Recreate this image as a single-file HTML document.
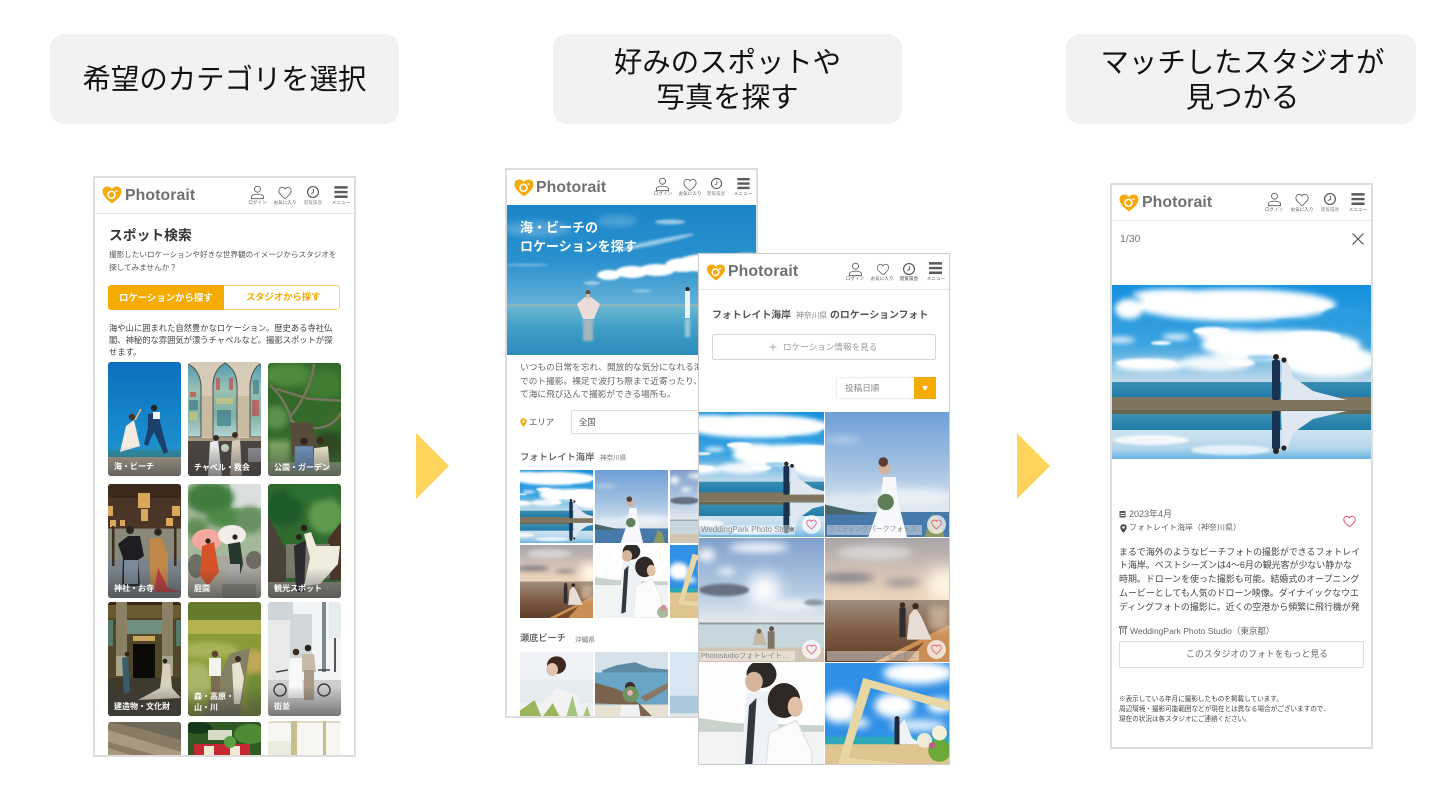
<!DOCTYPE html>
<html lang="ja"><head><meta charset="utf-8"><title>Photorait</title>
<style>
html,body{margin:0;padding:0;background:#fff}
body{position:relative;width:1452px;height:812px;overflow:hidden;font-family:"Liberation Sans","Noto Sans CJK JP",sans-serif;color:#444}
.h{position:absolute;top:34px;height:90px;width:349px;background:#f2f2f2;border-radius:14px;text-align:center;color:#111;font-size:28.400px;line-height:35px;font-family:"Liberation Sans","Noto Sans CJK JP",sans-serif}
.h span{position:absolute;left:0;right:0;top:12px}
.h span.one{top:29px}
.ar{position:absolute;top:433px;width:0;height:0;border-top:33px solid transparent;border-bottom:33px solid transparent;border-left:33px solid #ffd45c}
.ph{position:absolute;box-sizing:border-box;background:#fff;border:2px solid #ddd;overflow:hidden}
.in{position:absolute;width:1452px;height:812px;filter:blur(.3px)}
.t{position:absolute;white-space:nowrap;line-height:1}
.box{position:absolute;box-sizing:border-box}
svg.p{position:absolute;display:block}
.tile{position:absolute;width:73px;border-radius:3px;overflow:hidden}
.tile svg{position:absolute;left:0;top:0;width:100%;height:100%}
.tile:after{content:"";position:absolute;left:0;right:0;bottom:0;height:30px;background:linear-gradient(rgba(60,60,60,0),rgba(60,60,60,.6))}
.tile b{position:absolute;left:6px;z-index:2;color:#fff;font-size:8px;line-height:11px;font-weight:700;white-space:nowrap}
.logo{position:absolute;font-family:"Liberation Sans",sans-serif;font-weight:700;font-size:15.800px;color:#707070;line-height:1;letter-spacing:.1px}
.lb{position:absolute;font-size:4.600px;line-height:1;white-space:nowrap;color:#555;transform:translateX(-50%)}
.cap{position:absolute;background:rgba(255,255,255,.42);font-size:8px;line-height:10px;color:#8a8a8a;white-space:nowrap;overflow:hidden;padding-left:1px;box-sizing:border-box;height:10px}
.hc{position:absolute;width:19px;height:19px;border-radius:50%;background:rgba(255,255,255,.72)}
.hc svg{position:absolute;left:4px;top:4px}
</style></head><body>
<svg width="0" height="0" style="position:absolute">
<defs>
<filter id="b05" x="-40%" y="-40%" width="180%" height="180%"><feGaussianBlur stdDeviation=".5"/></filter>
<filter id="b1" x="-40%" y="-40%" width="180%" height="180%"><feGaussianBlur stdDeviation="1"/></filter>
<filter id="b2" x="-60%" y="-60%" width="220%" height="220%"><feGaussianBlur stdDeviation="3"/></filter>
<filter id="b6" x="-80%" y="-80%" width="260%" height="260%"><feGaussianBlur stdDeviation="6"/></filter>
<linearGradient id="gSky" x1="0" x2="0" y1="0" y2="1"><stop offset="0" stop-color="#1590de"/><stop offset=".6" stop-color="#3aa3e0"/><stop offset="1" stop-color="#c5dcea"/></linearGradient>
<linearGradient id="gSea" x1="0" x2="0" y1="0" y2="1"><stop offset="0" stop-color="#3a8eb2"/><stop offset="1" stop-color="#1f7ba8"/></linearGradient>
<linearGradient id="gRef" x1="0" x2="0" y1="0" y2="1"><stop offset="0" stop-color="#cfe3f0"/><stop offset=".6" stop-color="#b5d6ea"/><stop offset="1" stop-color="#6ab4e2"/></linearGradient>
<linearGradient id="gBri" x1="0" x2="0" y1="0" y2="1"><stop offset="0" stop-color="#6f9fd8"/><stop offset=".45" stop-color="#a4c3e2"/><stop offset=".8" stop-color="#dfe8f0"/></linearGradient>
<linearGradient id="gSun" x1="0" x2="0" y1="0" y2="1"><stop offset="0" stop-color="#7f9fcc"/><stop offset=".45" stop-color="#b8cde4"/><stop offset=".68" stop-color="#e6eaee"/></linearGradient>
<linearGradient id="gDusk" x1="0" x2="0" y1="0" y2="1"><stop offset="0" stop-color="#a8a4a8"/><stop offset=".5" stop-color="#cfc0b4"/><stop offset="1" stop-color="#eed6bc"/></linearGradient>
<linearGradient id="gSand" x1="0" x2="0" y1="0" y2="1"><stop offset="0" stop-color="#a08e80"/><stop offset=".5" stop-color="#7f5c44"/><stop offset="1" stop-color="#5e3d28"/></linearGradient>
<linearGradient id="gHero" x1="0" x2="0" y1="0" y2="1"><stop offset="0" stop-color="#1a86c8"/><stop offset=".55" stop-color="#2a90ce"/><stop offset="1" stop-color="#66b2d8"/></linearGradient>
<linearGradient id="gHeroSea" x1="0" x2="0" y1="0" y2="1"><stop offset="0" stop-color="#6cb6d0"/><stop offset=".45" stop-color="#3f9fc8"/><stop offset="1" stop-color="#2c8cbc"/></linearGradient>
<linearGradient id="gJump" x1="0" x2="0" y1="0" y2="1"><stop offset="0" stop-color="#0a70bd"/><stop offset=".7" stop-color="#1b8ecd"/><stop offset="1" stop-color="#45a4cf"/></linearGradient>
<linearGradient id="gWin" x1="0" x2="0" y1="0" y2="1"><stop offset="0" stop-color="#4f9cb0"/><stop offset=".35" stop-color="#9cc0b4"/><stop offset=".7" stop-color="#7fb0a4"/><stop offset="1" stop-color="#b6d4d4"/></linearGradient>
</defs>

<symbol id="reflect" viewBox="0 0 261 174" preserveAspectRatio="xMidYMid slice">
<rect width="261" height="98" fill="url(#gSky)"/>
<g fill="#fff" filter="url(#b2)"><ellipse cx="125" cy="20" rx="100" ry="16"/><ellipse cx="18" cy="24" rx="14" ry="10"/><ellipse cx="60" cy="10" rx="38" ry="6"/><ellipse cx="170" cy="60" rx="80" ry="15"/><ellipse cx="218" cy="76" rx="48" ry="16"/><ellipse cx="120" cy="50" rx="34" ry="6"/><ellipse cx="105" cy="78" rx="36" ry="8" opacity=".9"/><ellipse cx="40" cy="80" rx="36" ry="6"/><ellipse cx="65" cy="52" rx="14" ry="3" opacity=".9"/><ellipse cx="10" cy="55" rx="14" ry="3" opacity=".9"/></g>
<g fill="#fff" filter="url(#b1)"><ellipse cx="35" cy="78" rx="30" ry="4"/><ellipse cx="50" cy="58" rx="10" ry="2"/><ellipse cx="100" cy="46" rx="18" ry="4"/><ellipse cx="130" cy="78" rx="14" ry="3"/><ellipse cx="200" cy="52" rx="30" ry="6"/></g>
<g fill="#2a9ce0" filter="url(#b1)"><ellipse cx="235" cy="30" rx="24" ry="8" opacity=".8"/><ellipse cx="180" cy="36" rx="16" ry="2.500" opacity=".55"/><ellipse cx="150" cy="72" rx="14" ry="2" opacity=".4"/></g>
<rect y="97" width="261" height="16" fill="url(#gSea)"/>
<rect y="112" width="261" height="13" fill="#7f745e"/><rect y="125" width="261" height="5" fill="#67684f"/>
<rect y="129" width="261" height="16" fill="url(#gSea)"/>
<rect y="145" width="261" height="29" fill="url(#gRef)"/>
<g fill="#fff" filter="url(#b1)"><ellipse cx="40" cy="155" rx="38" ry="5" opacity=".8"/><ellipse cx="120" cy="165" rx="40" ry="5" opacity=".7"/></g>
<path d="M171 78 176 74 182 92 202 106 236 115 170 115Z" fill="#dfe7f0"/>
<rect x="161" y="75" width="8" height="40" rx="2" fill="#18324f"/><circle cx="165" cy="72" r="3" fill="#2a2420"/><circle cx="173" cy="75" r="2.600" fill="#2a2420"/>
<path d="M171 162 176 166 182 148 202 134 236 126 170 126Z" fill="#dfe7f0"/>
<rect x="161" y="126" width="8" height="38" rx="2" fill="#18324f"/><circle cx="165" cy="166" r="3" fill="#2a2420"/><circle cx="173" cy="163" r="2.600" fill="#2a2420"/>
</symbol>

<symbol id="bride" viewBox="0 0 100 100" preserveAspectRatio="xMidYMid slice">
<rect width="100" height="100" fill="url(#gBri)"/>
<g fill="#fff" filter="url(#b2)"><ellipse cx="70" cy="68" rx="34" ry="7" opacity=".6"/><ellipse cx="20" cy="70" rx="20" ry="5" opacity=".4"/><ellipse cx="15" cy="22" rx="14" ry="2" opacity=".5"/></g>
<rect y="80" width="100" height="20" fill="#4879ab"/>
<path d="M0 74 18 78 38 82 0 82Z" fill="#4a6668"/>
<path d="M80 100 86 82 92 86 96 100Z" fill="#8a9a60"/>
<path d="M47 52 57 52 59 72 66 100 35 100 44 74Z" fill="#f5f7fa"/>
<circle cx="48" cy="45" r="5" fill="#d2b09a"/><circle cx="47" cy="40" r="3.800" fill="#5b3c2e"/>
<circle cx="49" cy="72" r="6.500" fill="#5e7e55"/>
</symbol>

<symbol id="sun" viewBox="0 0 100 100" preserveAspectRatio="xMidYMid slice">
<rect width="100" height="100" fill="url(#gSun)"/>
<g filter="url(#b6)"><circle cx="52" cy="42" r="13" fill="#fff"/></g>
<g fill="#fff" filter="url(#b2)"><ellipse cx="48" cy="8" rx="24" ry="4" opacity=".9"/><ellipse cx="6" cy="14" rx="7" ry="5" opacity=".9"/><ellipse cx="22" cy="27" rx="7" ry="2.500"/><ellipse cx="76" cy="54" rx="20" ry="4" opacity=".7"/></g>
<g filter="url(#b1)"><ellipse cx="20" cy="42" rx="20" ry="5" fill="#666f80"/><ellipse cx="92" cy="52" rx="8" ry="2.500" fill="#8c97a4"/></g>
<rect y="68" width="100" height="22" fill="#c8d7de"/><rect y="68" width="100" height="1.500" fill="#8a9aa4"/>
<rect y="88" width="100" height="12" fill="#d2c4b2"/>
<path d="M45 76 51 76 54 86 43 86Z" fill="#c6b9a4"/><circle cx="48" cy="75" r="2" fill="#7a6656"/>
<rect x="55" y="75" width="5.500" height="14" fill="#7e7466"/><circle cx="58" cy="73" r="2" fill="#5d5048"/>
</symbol>

<symbol id="sunset" viewBox="0 0 100 100" preserveAspectRatio="xMidYMid slice">
<rect width="100" height="50" fill="url(#gDusk)"/>
<g filter="url(#b6)"><circle cx="96" cy="38" r="14" fill="#fff5e6"/></g>
<g filter="url(#b2)"><ellipse cx="18" cy="32" rx="22" ry="3.500" fill="#7f7d85"/><ellipse cx="62" cy="36" rx="14" ry="2.500" fill="#8d8a90"/><ellipse cx="40" cy="12" rx="30" ry="6" fill="#d8d4d4"/></g>
<rect y="50" width="100" height="50" fill="url(#gSand)"/>
<path d="M40 100 100 70 100 100Z" fill="#c98f55"/>
<path d="M48 100 80 84 66 100Z" fill="#7a4a2c"/>
<rect x="84" y="55" width="16" height="20" fill="#e6cfb4" opacity=".6" filter="url(#b2)"/>
<rect x="60" y="56" width="5" height="24" fill="#2f2d30"/><circle cx="62.500" cy="54" r="2.200" fill="#3a2a20"/>
<path d="M68 62 73 56 78 64 86 82 66 82Z" fill="#e6ddd6"/><circle cx="73" cy="55" r="2.600" fill="#3a2a20"/>
</symbol>

<symbol id="couple" viewBox="0 0 100 100" preserveAspectRatio="xMidYMid slice">
<rect width="100" height="100" fill="#fdfdfd"/>
<path d="M0 44 28 48 100 50 100 56 0 56Z" fill="#c8d3cb"/><rect y="55" width="100" height="45" fill="#f2f4f4"/>
<path d="M38 24 62 22 66 100 32 100Z" fill="#eef2f7"/>
<path d="M40 34 46 28 42 92 36 94Z" fill="#323842"/>
<ellipse cx="50" cy="9" rx="12" ry="11" fill="#2e2a28"/><ellipse cx="44" cy="15" rx="7" ry="8" fill="#d7b59b"/>
<path d="M56 56 78 46 90 70 92 100 52 100Z" fill="#fbfbfb" stroke="#e2e2e2"/>
<ellipse cx="68" cy="30" rx="13" ry="14" fill="#2f2825"/><ellipse cx="77" cy="35" rx="6" ry="8" fill="#e2c0a8"/>
<ellipse cx="93" cy="92" rx="8" ry="8" fill="#a9b89a"/><circle cx="94" cy="86" r="4" fill="#d68e99"/>
</symbol>

<symbol id="frame" viewBox="0 0 100 100" preserveAspectRatio="xMidYMid slice">
<rect width="100" height="100" fill="#2f90e6"/>
<g fill="#fff" filter="url(#b2)"><ellipse cx="75" cy="8" rx="28" ry="9"/><ellipse cx="12" cy="36" rx="14" ry="12"/><ellipse cx="56" cy="34" rx="16" ry="10"/><ellipse cx="92" cy="34" rx="10" ry="6"/><ellipse cx="75" cy="50" rx="22" ry="5" opacity=".8"/><ellipse cx="28" cy="48" rx="8" ry="4" opacity=".9"/></g>
<rect y="59" width="100" height="7" fill="#2da8b8"/><rect y="65" width="100" height="35" fill="#dfc48f"/>
<path d="M31 12 100 31 100 38 37 20 19 76 66 81 100 84 100 90 66 87 11 81Z" fill="#e8d6a4"/>
<rect x="56" y="46" width="4" height="19" fill="#1f2a3c"/><circle cx="58" cy="44.500" r="2" fill="#2a2420"/>
<path d="M60 50 64 45 70 60 78 65 60 65Z" fill="#f0f2f4"/>
<circle cx="92" cy="70" r="9" fill="#6ca838"/><circle cx="80" cy="62" r="6" fill="#f0ead8"/><circle cx="92" cy="56" r="6" fill="#f4f0d8"/><circle cx="86" cy="66" r="2.500" fill="#c05a90"/>
</symbol>

<symbol id="face" viewBox="0 0 100 100" preserveAspectRatio="xMidYMid slice">
<rect width="100" height="100" fill="#eef2f6"/><rect y="38" width="100" height="32" fill="#e4ecf0"/>
<path d="M30 72 50 50 80 60 80 100 30 100Z" fill="#f2f2f2"/>
<ellipse cx="50" cy="18" rx="13" ry="12" fill="#3c2820"/><ellipse cx="44" cy="24" rx="8" ry="9" fill="#e2c4ac"/>
<path d="M0 100 0 80 20 66 30 90 45 70 60 100Z" fill="#9ab65a"/><path d="M60 100 72 60 82 100 92 74 100 100Z" fill="#a7c47a"/>
</symbol>

<symbol id="lake" viewBox="0 0 100 100" preserveAspectRatio="xMidYMid slice">
<rect width="100" height="100" fill="#d5e2ec"/>
<path d="M10 25 30 18 55 14 75 22 100 24 100 30 10 30Z" fill="#5c8ba3"/>
<rect y="28" width="100" height="46" fill="#6ba5c5"/><rect y="72" width="100" height="28" fill="#e9e2d2"/>
<path d="M0 42 34 52 62 72 90 100 74 100 40 72 0 70Z" fill="#7a624d"/>
<path d="M62 62 100 42 100 50 70 68Z" fill="#8a7866"/>
<path d="M36 72 60 72 64 100 32 100Z" fill="#f2f2f2"/>
<circle cx="48" cy="48" r="7" fill="#36302c"/><circle cx="49" cy="58" r="11" fill="#6f9460"/><circle cx="48" cy="56" r="4" fill="#e4b0b4"/>
</symbol>

<symbol id="lightsea" viewBox="0 0 100 100" preserveAspectRatio="xMidYMid slice">
<rect width="100" height="100" fill="#d8e6f2"/><rect y="60" width="100" height="28" fill="#a9c9dc"/><rect y="84" width="100" height="16" fill="#e4e8ea"/><ellipse cx="100" cy="55" rx="8" ry="12" fill="#5a3c2c"/>
</symbol>

<symbol id="hero" viewBox="0 0 250 150" preserveAspectRatio="xMidYMid slice">
<rect width="250" height="100" fill="url(#gHero)"/>
<g fill="#fff" filter="url(#b1)"><ellipse cx="150" cy="37" rx="38" ry="2.500" transform="rotate(-12 150 37)" opacity=".5"/><ellipse cx="163" cy="17" rx="15" ry="2.500" opacity=".55"/><ellipse cx="20" cy="60" rx="22" ry="1.500" opacity=".3"/><ellipse cx="85" cy="78" rx="8" ry="1.800" opacity=".5"/><ellipse cx="135" cy="86" rx="10" ry="1.500" opacity=".35"/></g>
<g fill="#fff" filter="url(#b2)"><ellipse cx="30" cy="24" rx="34" ry="8" opacity=".22"/><ellipse cx="110" cy="16" rx="20" ry="6" opacity=".2"/></g>
<g fill="#fff" filter="url(#b1)"><ellipse cx="102" cy="70" rx="12" ry="5"/><ellipse cx="125" cy="67" rx="16" ry="6"/><ellipse cx="150" cy="65" rx="18" ry="6"/><ellipse cx="176" cy="60" rx="18" ry="7"/><ellipse cx="200" cy="58" rx="30" ry="9"/><ellipse cx="240" cy="56" rx="22" ry="8"/></g>
<rect y="99" width="250" height="2" fill="#8fb5bc"/>
<rect y="101" width="250" height="49" fill="url(#gHeroSea)"/>
<rect x="76" y="114" width="10" height="22" fill="#e6c8bc" opacity=".6" filter="url(#b1)"/>
<path d="M78 92 84 92 93 99 87 114 76 114 70 99Z" fill="#ecdcd8"/>
<circle cx="81" cy="87.500" r="2.400" fill="#6a4c3c"/><rect x="79.500" y="89" width="3" height="5" fill="#e8c4ac"/>
<rect x="178" y="86" width="5" height="27" fill="#f0f0f0"/><circle cx="180.500" cy="84" r="2" fill="#2a2420"/><rect x="178" y="114" width="5" height="18" fill="#d8e4e8" opacity=".6" filter="url(#b1)"/>
</symbol>

<symbol id="s1" viewBox="0 0 73 114" preserveAspectRatio="none">
<rect width="73" height="114" fill="url(#gJump)"/><rect y="88" width="73" height="8" fill="#2b8fa8"/><rect y="95" width="73" height="19" fill="#a79e8c"/>
<path d="M18 64 26 58 32 84 12 90Z" fill="#f2ece0"/><circle cx="24" cy="55" r="3.200" fill="#4a3428"/><path d="M27 58 33 47" stroke="#e2b89c" stroke-width="1.600"/>
<path d="M40 52 50 50 53 64 60 90 56 92 46 70 42 78 40 84 36 82 40 66Z" fill="#1c3f6e"/><circle cx="46" cy="46" r="3.200" fill="#2a2420"/><rect x="45" y="50" width="7" height="7" fill="#f4f4f4"/>
</symbol>

<symbol id="s2" viewBox="0 0 73 114" preserveAspectRatio="none">
<rect width="73" height="114" fill="#d6cbb6"/>
<g stroke="#4a4a4a" stroke-width="1" fill="url(#gWin)"><path d="M25 75V24Q25 8 37 1 49 8 49 24V75Z"/><path d="M-6 75V24Q-6 8 0 2 12 8 13 24V75Z"/><path d="M62 75V24Q63 8 72 2 80 8 80 24V75Z"/></g>
<g fill="#c2504c" opacity=".75"><rect x="28" y="16" width="4" height="12"/><rect x="41" y="16" width="4" height="12"/><rect x="2" y="30" width="6" height="5"/><rect x="64" y="38" width="7" height="16"/></g>
<g fill="#d9c86e" opacity=".6"><rect x="28" y="36" width="17" height="6"/><rect x="1" y="50" width="9" height="8"/></g>
<g fill="#3e7f8c" opacity=".7"><rect x="29" y="48" width="14" height="16"/><rect x="1" y="38" width="9" height="10"/><rect x="65" y="18" width="6" height="14"/></g>
<rect x="14" y="34" width="10" height="41" fill="#c8bba0"/><rect x="50" y="34" width="11" height="41" fill="#c8bba0"/>
<rect y="76" width="73" height="38" fill="#4a4340"/><rect y="76" width="73" height="3" fill="#a8987f"/><rect x="60" y="86" width="13" height="14" fill="#8a8a90"/>
<path d="M22 80 30 78 34 114 20 114Z" fill="#e8e8e8"/><circle cx="28" cy="76" r="3" fill="#352a24"/>
<path d="M44 79 52 77 54 114 42 114Z" fill="#d4cab8"/><circle cx="47" cy="73" r="3" fill="#3a2c22"/><circle cx="37" cy="86" r="4" fill="#c8d0b8"/>
</symbol>

<symbol id="s3" viewBox="0 0 73 114" preserveAspectRatio="none">
<rect width="73" height="114" fill="#336a2a"/>
<g filter="url(#b2)"><ellipse cx="20" cy="12" rx="24" ry="12" fill="#4f8a3e"/><ellipse cx="55" cy="22" rx="20" ry="16" fill="#3f7c32"/><ellipse cx="8" cy="55" rx="12" ry="12" fill="#5a9048"/><ellipse cx="66" cy="55" rx="10" ry="10" fill="#3a6a2c"/></g>
<g filter="url(#b2)"><rect y="78" width="22" height="36" fill="#7aa25e"/><rect x="50" y="70" width="23" height="24" fill="#2e4a24"/></g>
<path d="M2 22C14 34 22 48 24 62M46 1C44 22 32 42 24 52 18 58 30 62 42 66 54 66 66 64 73 50M8 26 40 36 73 38" fill="none" stroke="#7a7460" stroke-width="2.400"/>
<path d="M22 60H44L52 94H24Z" fill="#574c3c"/>
<rect y="100" width="73" height="14" fill="#8aa07a"/>
<path d="M27 84 45 84 46 108 26 108Z" fill="#6c8fb8"/><circle cx="36" cy="79" r="3.600" fill="#2e2420"/>
<path d="M46 86 60 84 62 108 46 108Z" fill="#e8e2c8"/><circle cx="52" cy="78" r="3.600" fill="#3a2a20"/>
</symbol>

<symbol id="s4" viewBox="0 0 73 114" preserveAspectRatio="none">
<rect width="73" height="114" fill="#6e5a45"/><rect width="73" height="14" fill="#3c2a1c"/><rect y="14" width="73" height="30" fill="#4b3526"/>
<g fill="#d9a85a"><rect x="30" y="9" width="12" height="15"/><rect x="33" y="25" width="7" height="12"/><rect x="64" y="22" width="8" height="10"/><rect x="0" y="22" width="5" height="10"/><rect x="2" y="36" width="6" height="7"/><rect x="12" y="36" width="5" height="6"/><rect x="58" y="34" width="7" height="8"/></g>
<rect y="45" width="73" height="30" fill="#8a8878"/><rect y="75" width="73" height="39" fill="#7a838c"/>
<rect x="4" y="42" width="2.500" height="40" fill="#3e2c1e"/><rect x="66" y="42" width="2.500" height="40" fill="#3e2c1e"/>
<path d="M10 60 20 52 32 52 36 72 30 76 32 102 14 102 15 74Z" fill="#1e1d22"/><circle cx="22" cy="46" r="4" fill="#2a2420"/><rect x="16" y="76" width="14" height="24" fill="#7a8a9a"/>
<path d="M42 54 54 54 60 72 60 105 42 105Z" fill="#c2884a"/><path d="M50 84 60 104 72 108 46 108Z" fill="#d03a3a"/><circle cx="50" cy="48" r="3.800" fill="#2a2420"/>
</symbol>

<symbol id="s5" viewBox="0 0 73 114" preserveAspectRatio="none">
<rect width="73" height="114" fill="#a4b89a"/>
<rect x="42" width="31" height="24" fill="#dadfde"/>
<g filter="url(#b2)"><ellipse cx="22" cy="14" rx="24" ry="16" fill="#3f7c3c"/><ellipse cx="40" cy="34" rx="22" ry="10" fill="#4d8a47"/><ellipse cx="62" cy="36" rx="14" ry="14" fill="#688f62"/><ellipse cx="8" cy="44" rx="12" ry="10" fill="#5f8f55"/></g>
<rect y="72" width="73" height="42" fill="#a8a89c"/><ellipse cx="66" cy="76" rx="8" ry="9" fill="#6d6b62"/><ellipse cx="8" cy="82" rx="8" ry="12" fill="#6c7064"/><rect x="34" y="100" width="34" height="14" fill="#8a8a7e"/>
<ellipse cx="19" cy="56" rx="15" ry="11" fill="#f3a8a0"/><ellipse cx="44" cy="51" rx="14" ry="10" fill="#f2ede8"/>
<path d="M14 62 26 58 31 88 20 102 12 92Z" fill="#d6532a"/><circle cx="20" cy="57" r="2.600" fill="#2a2018"/>
<path d="M40 60 52 58 55 80 50 98 44 98Z" fill="#26382e"/><circle cx="47" cy="53" r="2.600" fill="#2a2018"/><rect x="41" y="80" width="11" height="18" fill="#a9a9aa"/>
</symbol>

<symbol id="s6" viewBox="0 0 73 114" preserveAspectRatio="none">
<rect width="73" height="114" fill="#2f6a2e"/>
<g filter="url(#b2)"><ellipse cx="16" cy="24" rx="18" ry="18" fill="#1f5a2a"/><ellipse cx="58" cy="32" rx="18" ry="18" fill="#5f9b4e"/><ellipse cx="44" cy="8" rx="24" ry="10" fill="#2a6f33"/></g>
<path d="M0 32 18 66V100H0Z" fill="#4a4238"/><path d="M60 55 73 38V96H62Z" fill="#4a3428"/><rect x="18" y="60" width="44" height="34" fill="#7b7a6a"/>
<rect y="98" width="73" height="16" fill="#8a8a80"/>
<path d="M26 62 38 56 36 108 28 108Z" fill="#2a2a30"/><circle cx="31" cy="53" r="3" fill="#2a2420"/>
<path d="M36 50 43 48 48 62 72 62 70 80 52 100 36 102 42 74Z" fill="#f0ebdf"/><circle cx="36" cy="44" r="3.200" fill="#2a2018"/>
</symbol>

<symbol id="s7" viewBox="0 0 73 114" preserveAspectRatio="none">
<rect width="73" height="114" fill="#51452a"/><rect width="73" height="16" fill="#6a5a32"/><rect y="0" width="73" height="3" fill="#3c2418"/>
<rect x="16" y="18" width="42" height="14" fill="#6f907f"/><rect y="18" width="5" height="26" fill="#567a6a"/><rect x="68" y="18" width="5" height="26" fill="#567a6a"/>
<rect x="8" y="0" width="11" height="74" fill="#8a8064"/><rect x="54" y="0" width="11" height="74" fill="#8a8064"/><rect x="8" y="54" width="11" height="20" fill="#a8a58c"/><rect x="54" y="54" width="11" height="20" fill="#a8a58c"/>
<rect x="25" y="42" width="22" height="35" fill="#0d0b08"/><rect x="25" y="34" width="22" height="5" fill="#c9a860"/>
<rect y="76" width="73" height="38" fill="#3e3a2e"/>
<path d="M14 56 20 54 22 90 16 92Z" fill="#3b5c6a"/><circle cx="19" cy="52" r="2.300" fill="#2a2420"/>
<path d="M55 62 62 62 64 86 73 96 30 98 52 86Z" fill="#d8cfbd"/><circle cx="57" cy="59" r="2.300" fill="#2a2018"/>
</symbol>

<symbol id="s8" viewBox="0 0 73 114" preserveAspectRatio="none">
<rect width="73" height="114" fill="#8a9a38"/><rect y="0" width="73" height="18" fill="#667a2c"/><rect y="18" width="73" height="14" fill="#b4b24e"/>
<g filter="url(#b2)"><ellipse cx="20" cy="48" rx="30" ry="8" fill="#a8b45a"/><ellipse cx="66" cy="60" rx="12" ry="12" fill="#c0a858"/><ellipse cx="8" cy="80" rx="16" ry="20" fill="#aab568"/><ellipse cx="68" cy="90" rx="10" ry="20" fill="#6f8a38"/></g>
<path d="M42 52 62 46 52 114 14 114Z" fill="#857f63"/>
<rect x="21" y="56" width="12" height="18" fill="#f2f2ee"/><rect x="23" y="74" width="9" height="18" fill="#7c6c54"/><circle cx="27" cy="52" r="3.400" fill="#5a4630"/>
<path d="M44 62 52 60 56 76 52 102 46 102Z" fill="#e8e2d2"/><circle cx="50" cy="57" r="3" fill="#3a2a20"/>
</symbol>

<symbol id="s9" viewBox="0 0 73 114" preserveAspectRatio="none">
<rect width="73" height="114" fill="#f2f4f5"/><rect y="0" width="25" height="18" fill="#ced6da"/><rect x="0" y="18" width="24" height="60" fill="#e8eaea"/><rect x="22" y="12" width="22" height="44" fill="#d2d7d9"/>
<rect x="54" width="4" height="70" fill="#7b8a8e"/><rect x="66" y="36" width="2" height="34" fill="#555"/><rect x="61" width="12" height="36" fill="#e6ecee"/>
<rect y="78" width="73" height="36" fill="#cfd0ce"/>
<path d="M22 56 32 56 36 96 20 96Z" fill="#f8f8f6"/><circle cx="28" cy="50" r="3.300" fill="#3a2a20"/>
<path d="M34 52 46 52 48 70 34 70Z" fill="#c8bba6"/><rect x="36" y="68" width="10" height="30" fill="#a89a86"/><circle cx="40" cy="46" r="3.300" fill="#2a2420"/>
<g fill="none" stroke="#3a3a3a" stroke-width="1.400"><circle cx="12" cy="88" r="6"/><circle cx="56" cy="88" r="6"/></g><path d="M8 70 20 68" stroke="#444" stroke-width="1.500"/><path d="M50 68 62 68" stroke="#444" stroke-width="1.500"/>
</symbol>

<symbol id="s10" viewBox="0 0 73 114" preserveAspectRatio="none">
<rect width="73" height="114" fill="#8a7c64"/><path d="M0 8 73 30V40L0 20ZM0 26 73 48V54L0 34Z" fill="#a89a82"/><path d="M0 0 30 6 73 18V0Z" fill="#6e6656"/>
</symbol>
<symbol id="s11" viewBox="0 0 73 114" preserveAspectRatio="none">
<rect width="73" height="114" fill="#2f5a24"/><ellipse cx="62" cy="12" rx="16" ry="10" fill="#4f8a36"/><ellipse cx="10" cy="6" rx="14" ry="6" fill="#123a1a"/><rect x="20" y="8" width="24" height="10" fill="#d6dcc8"/><rect x="6" y="22" width="56" height="13" fill="#c42830"/><rect x="16" y="24" width="10" height="10" fill="#f0ead2"/><rect x="42" y="24" width="10" height="10" fill="#f0ead2"/><circle cx="42" cy="20" r="6" fill="#5aa040"/>
</symbol>
<symbol id="s12" viewBox="0 0 73 114" preserveAspectRatio="none">
<rect width="73" height="114" fill="#f7f6f1"/><rect width="73" height="2" fill="#e0d8c0"/><rect x="23" width="6" height="114" fill="#c9bd90"/><rect x="55" width="3" height="114" fill="#c9bd90"/><rect y="20" width="23" height="94" fill="#ecebe0"/>
</symbol>

<symbol id="logoh" viewBox="0 0 40 36">
<path d="M20 35C10 27 1 20 1 10.500 1 4.800 5.500 1 10.500 1 14.500 1 18 3 20 6 22 3 25.500 1 29.500 1 34.500 1 39 4.800 39 10.500 39 20 30 27 20 35Z" fill="#f5a90a"/>
<circle cx="19" cy="17.500" r="7" fill="none" stroke="#fff" stroke-width="3.200"/><circle cx="29" cy="10" r="2" fill="#fff"/>
</symbol>
<symbol id="ilogin" viewBox="0 0 16 16"><circle cx="8" cy="4.500" r="3.200" fill="none" stroke="#666" stroke-width="1"/><path d="M1.500 14.500V12.800C1.500 10.800 4.500 9.800 8 9.800 11.500 9.800 14.500 10.800 14.500 12.800V14.500Z" fill="none" stroke="#666" stroke-width="1"/></symbol>
<symbol id="iheart" viewBox="0 0 16 16"><path d="M8 14.500C5 12 1 9 1 5.500 1 3 3 1.500 4.800 1.500 6.200 1.500 7.400 2.300 8 3.500 8.600 2.300 9.800 1.500 11.200 1.500 13 1.500 15 3 15 5.500 15 9 11 12 8 14.500Z" fill="none" stroke="#666" stroke-width="1"/></symbol>
<symbol id="iclock" viewBox="0 0 16 16"><circle cx="8" cy="8" r="6.200" fill="none" stroke="#555" stroke-width="1.300"/><path d="M8.500 4.500V8.500L6 9.800" fill="none" stroke="#555" stroke-width="1.100"/></symbol>
<symbol id="imenu" viewBox="0 0 16 16"><path d="M1 2.500H15M1 7.500H15M1 12.500H15" stroke="#5a5a5a" stroke-width="2.600"/></symbol>
<symbol id="ipink" viewBox="0 0 16 16"><path d="M8 14.500C5 12 1 9 1 5.500 1 3 3 1.500 4.800 1.500 6.200 1.500 7.400 2.300 8 3.500 8.600 2.300 9.800 1.500 11.200 1.500 13 1.500 15 3 15 5.500 15 9 11 12 8 14.500Z" fill="none" stroke="#e2607c" stroke-width="1.300"/></symbol>
</svg>

<div class="h" style="left:50px"><span class="one">希望のカテゴリを選択</span></div>
<div class="h" style="left:553px"><span>好みのスポットや<br>写真を探す</span></div>
<div class="h" style="left:1066px;width:350px"><span style="left:3px">マッチしたスタジオが<br>見つかる</span></div>
<div class="ar" style="left:416px"></div>
<div class="ar" style="left:1017px"></div>

<!-- PHONE 1 -->
<div class="ph" style="left:93px;top:176px;width:263px;height:581px"><div class="in" style="left:-95px;top:-178px">
<svg class="p" style="left:102px;top:186px" width="20" height="18"><use href="#logoh"/></svg>
<div class="logo" style="left:125px;top:188px">Photorait</div>
<svg class="p" style="left:250px;top:185px" width="15" height="15"><use href="#ilogin"/></svg>
<svg class="p" style="left:278px;top:186px" width="14" height="14"><use href="#iheart"/></svg>
<svg class="p" style="left:306px;top:185px" width="14" height="14"><use href="#iclock"/></svg>
<svg class="p" style="left:333px;top:185px" width="16" height="15"><use href="#imenu"/></svg>
<div class="lb" style="left:257.500px;top:201px">ログイン</div>
<div class="lb" style="left:285px;top:201px">お気に入り</div>
<div class="lb" style="left:313px;top:201px;color:#999">閲覧履歴</div>
<div class="lb" style="left:341px;top:201px">メニュー</div>
<div class="box" style="left:95px;top:213px;width:259px;height:1px;background:#e4e4e4"></div>
<div class="t" style="left:109px;top:229px;font-size:13.800px;font-weight:700;color:#333">スポット検索</div>
<div class="t" style="left:109px;top:251px;font-size:7.600px;color:#555">撮影したいロケーションや好きな世界観のイメージからスタジオを</div>
<div class="t" style="left:109px;top:264px;font-size:7.600px;color:#555">探してみませんか？</div>
<div class="box" style="left:108px;top:285px;width:232px;height:25px;border:1px solid #fbd16e;border-radius:3px;background:#fff"></div>
<div class="box" style="left:108px;top:285px;width:116px;height:25px;background:#f5ab00;border-radius:3px 0 0 3px"></div>
<div class="t" style="left:119px;top:293px;font-size:9.400px;font-weight:700;color:#fff">ロケーションから探す</div>
<div class="t" style="left:246px;top:293px;font-size:9.300px;font-weight:700;color:#f5ab00">スタジオから探す</div>
<div class="t" style="left:109px;top:323.500px;font-size:8.300px;color:#444">海や山に囲まれた自然豊かなロケーション。歴史ある寺社仏</div>
<div class="t" style="left:109px;top:335.500px;font-size:8.300px;color:#444">閣、神秘的な雰囲気が漂うチャペルなど。撮影スポットが探</div>
<div class="t" style="left:109px;top:347.500px;font-size:8.300px;color:#444">せます。</div>

<div class="tile" style="left:108px;top:362px;height:114px"><svg><use href="#s1"/></svg><b style="bottom:4px">海・ビーチ</b></div>
<div class="tile" style="left:188px;top:362px;height:114px"><svg><use href="#s2"/></svg><b style="bottom:3px">チャペル・教会</b></div>
<div class="tile" style="left:268px;top:363px;height:113px"><svg><use href="#s3"/></svg><b style="bottom:3px">公園・ガーデン</b></div>
<div class="tile" style="left:108px;top:484px;height:114px"><svg><use href="#s4"/></svg><b style="bottom:4px">神社・お寺</b></div>
<div class="tile" style="left:188px;top:484px;height:114px"><svg><use href="#s5"/></svg><b style="bottom:4px">庭園</b></div>
<div class="tile" style="left:268px;top:484px;height:114px"><svg><use href="#s6"/></svg><b style="bottom:4px">観光スポット</b></div>
<div class="tile" style="left:108px;top:602px;height:114px"><svg><use href="#s7"/></svg><b style="bottom:4px">建造物・文化財</b></div>
<div class="tile" style="left:188px;top:602px;height:114px"><svg><use href="#s8"/></svg><b style="bottom:3px">森・高原・<br>山・川</b></div>
<div class="tile" style="left:268px;top:602px;height:114px"><svg><use href="#s9"/></svg><b style="bottom:4px">街並</b></div>
<div class="tile" style="left:108px;top:722px;height:114px"><svg><use href="#s10"/></svg></div>
<div class="tile" style="left:188px;top:722px;height:114px"><svg><use href="#s11"/></svg></div>
<div class="tile" style="left:268px;top:721px;height:114px"><svg><use href="#s12"/></svg></div>
</div></div>

<!-- PHONE 2 -->
<div class="ph" style="left:505px;top:168px;width:253px;height:550px"><div class="in" style="left:-507px;top:-170px">
<svg class="p" style="left:514px;top:179px" width="20" height="18"><use href="#logoh"/></svg>
<div class="logo" style="left:536px;top:180px">Photorait</div>
<svg class="p" style="left:655px;top:177px" width="15" height="15"><use href="#ilogin"/></svg>
<svg class="p" style="left:683px;top:178px" width="14" height="14"><use href="#iheart"/></svg>
<svg class="p" style="left:710px;top:177px" width="13" height="13"><use href="#iclock"/></svg>
<svg class="p" style="left:736px;top:177px" width="15" height="14"><use href="#imenu"/></svg>
<div class="lb" style="left:663px;top:192px">ログイン</div>
<div class="lb" style="left:690px;top:192px">お気に入り</div>
<div class="lb" style="left:716px;top:192px;color:#999">閲覧履歴</div>
<div class="lb" style="left:743px;top:192px">メニュー</div>
<svg class="p" style="left:507px;top:205px" width="250" height="150"><use href="#hero"/></svg>
<div class="t" style="left:520px;top:221px;font-size:13px;font-weight:700;color:#fff">海・ビーチの</div>
<div class="t" style="left:520px;top:240px;font-size:13px;font-weight:700;color:#fff">ロケーションを探す</div>
<div class="t" style="left:520px;top:363px;font-size:8.700px;color:#666">いつもの日常を忘れ、開放的な気分になれる海</div>
<div class="t" style="left:520px;top:377px;font-size:8.700px;color:#666">でのト撮影。裸足で波打ち際まで近寄ったり、</div>
<div class="t" style="left:520px;top:390px;font-size:8.700px;color:#666">て海に飛び込んで撮影ができる場所も。</div>
<svg class="p" style="left:520px;top:418px" width="7" height="9" viewBox="0 0 7 9"><path d="M3.500 9C2 7 .3 5.200 .3 3.400A3.200 3.200 0 0 1 6.700 3.400C6.700 5.200 5 7 3.500 9Z" fill="#f5ab00"/><circle cx="3.500" cy="3.400" r="1.300" fill="#fff"/></svg>
<div class="t" style="left:529px;top:418px;font-size:8.400px;color:#555">エリア</div>
<div class="box" style="left:571px;top:410px;width:170px;height:24px;border:1px solid #ddd;border-radius:2px"></div>
<div class="t" style="left:579px;top:418px;font-size:8.400px;color:#555">全国</div>
<div class="t" style="left:520px;top:453px;font-size:9.300px;font-weight:500;color:#555">フォトレイト海岸</div>
<div class="t" style="left:600px;top:455.500px;font-size:6.600px;color:#777">神奈川県</div>
<svg class="p" style="left:520px;top:470px" width="73" height="73"><use href="#reflect"/></svg>
<svg class="p" style="left:595px;top:470px" width="73" height="73"><use href="#bride"/></svg>
<svg class="p" style="left:670px;top:470px" width="73" height="73"><use href="#sun"/></svg>
<svg class="p" style="left:520px;top:545px" width="73" height="73"><use href="#sunset"/></svg>
<svg class="p" style="left:595px;top:545px" width="73" height="73"><use href="#couple"/></svg>
<svg class="p" style="left:670px;top:545px" width="73" height="73"><use href="#frame"/></svg>
<div class="t" style="left:520px;top:634px;font-size:9.200px;font-weight:500;color:#555">瀬底ビーチ</div>
<div class="t" style="left:575px;top:637.500px;font-size:6.600px;color:#777">沖縄県</div>
<svg class="p" style="left:520px;top:652px" width="73" height="73"><use href="#face"/></svg>
<svg class="p" style="left:595px;top:652px" width="73" height="73"><use href="#lake"/></svg>
<svg class="p" style="left:670px;top:652px" width="73" height="73"><use href="#lightsea"/></svg>
</div></div>

<!-- PHONE 3 -->
<div class="ph" style="left:698px;top:253px;width:252px;height:512px;border:1px solid #ccc"><div class="in" style="left:-699px;top:-254px">
<svg class="p" style="left:706px;top:264px" width="20" height="17"><use href="#logoh"/></svg>
<div class="logo" style="left:728px;top:264px">Photorait</div>
<svg class="p" style="left:848px;top:262px" width="15" height="15"><use href="#ilogin"/></svg>
<svg class="p" style="left:876px;top:263px" width="14" height="13"><use href="#iheart"/></svg>
<svg class="p" style="left:902px;top:262px" width="14" height="14"><use href="#iclock"/></svg>
<svg class="p" style="left:928px;top:261px" width="15" height="15"><use href="#imenu"/></svg>
<div class="lb" style="left:855px;top:277px">ログイン</div>
<div class="lb" style="left:882px;top:277px">お気に入り</div>
<div class="lb" style="left:909px;top:277px">閲覧履歴</div>
<div class="lb" style="left:936px;top:277px">メニュー</div>
<div class="box" style="left:699px;top:289px;width:250px;height:1px;background:#e6e6e6"></div>
<div class="t" style="left:712px;top:311px;font-size:9.900px;font-weight:700;color:#555">フォトレイト海岸</div>
<div class="t" style="left:796px;top:312px;font-size:7.800px;color:#888">神奈川県</div>
<div class="t" style="left:830px;top:311px;font-size:9.900px;font-weight:700;color:#555">のロケーションフォト</div>
<div class="box" style="left:712px;top:334px;width:224px;height:26px;border:1px solid #d8d8d8;border-radius:2px"></div>
<svg class="p" style="left:769px;top:343px" width="8" height="8" viewBox="0 0 8 8"><path d="M4 .5V7.500M.5 4H7.500" stroke="#aaa" stroke-width=".9" fill="none"/></svg>
<div class="t" style="left:783px;top:343px;font-size:8.600px;color:#999">ロケーション情報を見る</div>
<div class="box" style="left:836px;top:377px;width:100px;height:22px;border:1px solid #eee"></div>
<div class="box" style="left:914px;top:377px;width:22px;height:22px;background:#f5ab00"></div>
<div class="box" style="left:922px;top:386px;width:0;height:0;border-left:3px solid transparent;border-right:3px solid transparent;border-top:5px solid #fff"></div>
<div class="t" style="left:845px;top:383.500px;font-size:8.600px;color:#888">投稿日順</div>
<svg class="p" style="left:699px;top:412px" width="125" height="125"><use href="#reflect"/></svg>
<svg class="p" style="left:825px;top:412px" width="124" height="125"><use href="#bride"/></svg>
<svg class="p" style="left:699px;top:538px" width="125" height="124"><use href="#sun"/></svg>
<svg class="p" style="left:825px;top:538px" width="124" height="124"><use href="#sunset"/></svg>
<svg class="p" style="left:699px;top:663px" width="125" height="125"><use href="#couple"/></svg>
<svg class="p" style="left:825px;top:663px" width="124" height="125"><use href="#frame"/></svg>
<div class="cap" style="left:700px;top:525px;width:95px">WeddingPark Photo Studio</div>
<div class="cap" style="left:827px;top:525px;width:95px;font-size:6.900px">ウエディングパークフォトス…</div>
<div class="cap" style="left:700px;top:651px;width:95px;font-size:7.200px">Photostudioフォトレイト…</div>
<div class="cap" style="left:827px;top:651px;width:92px;font-size:7.200px">Photostudioフォトレイト…</div>
<div class="hc" style="left:802px;top:515px"><svg width="11" height="11"><use href="#ipink"/></svg></div>
<div class="hc" style="left:927px;top:515px"><svg width="11" height="11"><use href="#ipink"/></svg></div>
<div class="hc" style="left:802px;top:640px"><svg width="11" height="11"><use href="#ipink"/></svg></div>
<div class="hc" style="left:927px;top:640px"><svg width="11" height="11"><use href="#ipink"/></svg></div>
</div></div>

<!-- PHONE 4 -->
<div class="ph" style="left:1110px;top:183px;width:263px;height:566px"><div class="in" style="left:-1112px;top:-185px">
<svg class="p" style="left:1119px;top:194px" width="20" height="18"><use href="#logoh"/></svg>
<div class="logo" style="left:1142px;top:195px">Photorait</div>
<svg class="p" style="left:1267px;top:192px" width="15" height="15"><use href="#ilogin"/></svg>
<svg class="p" style="left:1295px;top:193px" width="14" height="14"><use href="#iheart"/></svg>
<svg class="p" style="left:1323px;top:192px" width="14" height="14"><use href="#iclock"/></svg>
<svg class="p" style="left:1350px;top:192px" width="16" height="15"><use href="#imenu"/></svg>
<div class="lb" style="left:1274px;top:208px">ログイン</div>
<div class="lb" style="left:1302px;top:208px">お気に入り</div>
<div class="lb" style="left:1330px;top:208px;color:#999">閲覧履歴</div>
<div class="lb" style="left:1358px;top:208px">メニュー</div>
<div class="box" style="left:1112px;top:220px;width:259px;height:1px;background:#e6e6e6"></div>
<div class="t" style="left:1120px;top:234px;font-size:10.500px;color:#777">1/30</div>
<svg class="p" style="left:1351px;top:232px" width="14" height="14" viewBox="0 0 14 14"><path d="M1.500 1.500 12.500 12.500M12.500 1.500 1.500 12.500" stroke="#555" stroke-width="1.200" fill="none"/></svg>
<svg class="p" style="left:1112px;top:285px" width="259" height="174"><use href="#reflect"/></svg>
<svg class="p" style="left:1119px;top:510px" width="7" height="8" viewBox="0 0 7 8"><rect x=".5" y="1" width="6" height="6.500" fill="#555"/><rect x="1.500" y="3" width="4" height="1" fill="#fff"/><rect x="1.500" y="5" width="4" height="1" fill="#fff"/></svg>
<div class="t" style="left:1129px;top:509.500px;font-size:9px;color:#666">2023年4月</div>
<svg class="p" style="left:1120px;top:524px" width="7" height="9" viewBox="0 0 7 9"><path d="M3.500 9C2 7 .3 5.200 .3 3.400A3.200 3.200 0 0 1 6.700 3.400C6.700 5.200 5 7 3.500 9Z" fill="#444"/><circle cx="3.500" cy="3.400" r="1.300" fill="#fff"/></svg>
<div class="t" style="left:1129px;top:524px;font-size:8px;color:#666">フォトレイト海岸（神奈川県）</div>
<svg class="p" style="left:1343px;top:515px" width="13" height="13"><use href="#ipink"/></svg>
<div class="t" style="left:1119px;top:547.500px;font-size:8.950px;color:#444">まるで海外のようなビーチフォトの撮影ができるフォトレイ</div>
<div class="t" style="left:1119px;top:561px;font-size:8.950px;color:#444">ト海岸。ベストシーズンは4〜6月の観光客が少ない静かな</div>
<div class="t" style="left:1119px;top:575px;font-size:8.950px;color:#444">時期。ドローンを使った撮影も可能。結婚式のオープニング</div>
<div class="t" style="left:1119px;top:589px;font-size:8.950px;color:#444">ムービーとしても人気のドローン映像。ダイナイックなウエ</div>
<div class="t" style="left:1119px;top:603px;font-size:8.950px;color:#444">ディングフォトの撮影に。近くの空港から頻繁に飛行機が発</div>
<svg class="p" style="left:1119px;top:626px" width="8" height="9" viewBox="0 0 8 9"><path d="M.5.500H7.500V2H.5ZM1.500 2V8.500M6.500 2V8.500M3 4H5M3 6H5" fill="none" stroke="#555" stroke-width=".8"/></svg>
<div class="t" style="left:1130px;top:626.500px;font-size:8.500px;color:#666">WeddingPark Photo Studio（東京都）</div>
<div class="box" style="left:1119px;top:641px;width:245px;height:27px;border:1px solid #ddd;border-radius:2px"></div>
<div class="t" style="left:1186px;top:650px;font-size:8.900px;color:#666">このスタジオのフォトをもっと見る</div>
<div class="t" style="left:1119px;top:697px;font-size:6.600px;color:#444">※表示している年月に撮影したものを掲載しています。</div>
<div class="t" style="left:1119px;top:707px;font-size:6.600px;color:#444">周辺環境・撮影可能範囲などが現在とは異なる場合がございますので、</div>
<div class="t" style="left:1119px;top:717px;font-size:6.600px;color:#444">現在の状況は各スタジオにご連絡ください。</div>
</div></div>
</body></html>
